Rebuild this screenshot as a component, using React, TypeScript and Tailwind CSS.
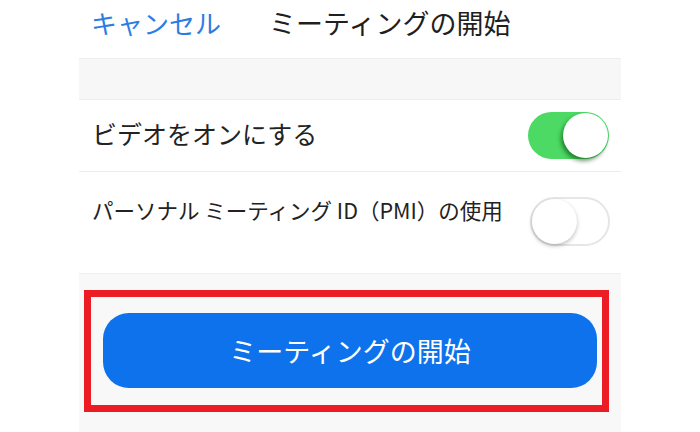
import React from "react";

function Toggle({ on }: { on: boolean }) {
  if (on) {
    return (
      <div className="relative w-[81px] h-[47px] rounded-full bg-[#4cd964] shrink-0">
        <div className="absolute right-[1px] top-[1px] w-[45px] h-[45px] rounded-full bg-white shadow-[-2px_3px_4px_rgba(0,60,0,0.55)]" />
      </div>
    );
  }
  return (
    <div className="relative w-[80px] h-[49px] rounded-full bg-white border-2 border-[#e6e6e6] shrink-0">
      <div className="absolute left-0 top-0 w-[45px] h-[45px] rounded-full bg-white shadow-[0_2px_4px_rgba(0,0,0,0.25)]" />
    </div>
  );
}

export default function App() {
  return (
    <div
      className="w-full h-[432px] bg-white overflow-hidden"
      style={{ fontFamily: '"Noto Sans CJK JP", "Noto Sans", sans-serif' }}
    >
      <div className="ml-[79px] w-[542px] h-full flex flex-col">
        {/* header */}
        <div className="h-[58px] flex items-start pt-[6px] px-[12px]">
          <span className="text-[26px] leading-[34px] text-[#2b7de3]">キャンセル</span>
          <span className="ml-[48px] text-[27px] leading-[34px] text-[#1f1f1f]">ミーティングの開始</span>
        </div>

        <div className="h-[42px] bg-[#f7f7f7] border-y border-[#ededed]" />

        {/* rows */}
        <div className="h-[72px] flex items-center justify-between pl-[13px] pr-[12px] border-b border-[#ececec]">
          <span className="text-[25px] leading-none text-[#222] mt-[-4px]">ビデオをオンにする</span>
          <Toggle on />
        </div>
        <div className="h-[101px] flex items-start justify-between pl-[13px] pr-[11px]">
          <span className="mt-[26px] text-[21.5px] leading-[24px] text-[#222]">
            パーソナル ミーティング ID（PMI）の使用
          </span>
          <div className="mt-[25px]">
            <Toggle on={false} />
          </div>
        </div>

        {/* start button area */}
        <div className="flex-1 bg-[#f8f8f8] border-t border-[#efefef] pt-[16px] pl-[5px]">
          <div className="w-[525px] h-[122px] border-[7px] border-[#ec1c24] pl-[12px] pr-[5px] pt-[16px]">
            <button className="w-full h-[75px] rounded-[26px] bg-[#0e72ed] text-white text-[27px] leading-none flex items-center justify-center">
              ミーティングの開始
            </button>
          </div>
        </div>
      </div>
    </div>
  );
}
